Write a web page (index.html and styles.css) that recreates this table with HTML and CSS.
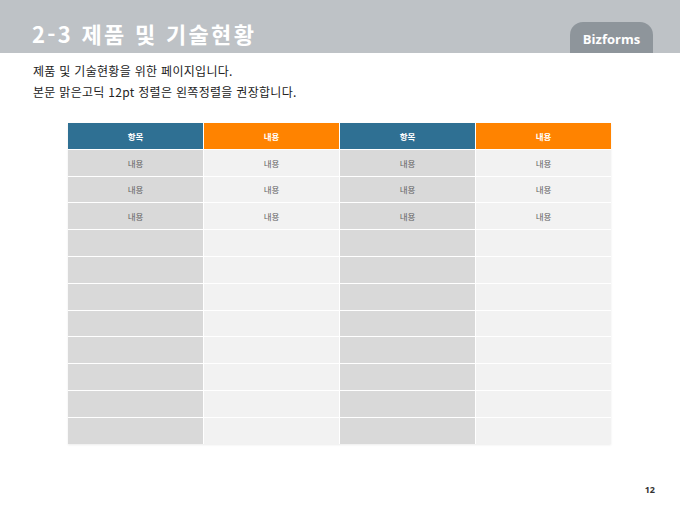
FILE: index.html
```html
<!DOCTYPE html>
<html lang="ko">
<head>
<meta charset="utf-8">
<link rel="stylesheet" href="styles.css">
</head>
<body>
<div class="slide">
  <header class="topbar">
    <h1 class="title">2-3 제품 및 기술현황</h1>
    <div class="tab">Bizforms</div>
  </header>
  <div class="intro">
    <p>제품 및 기술현황을 위한 페이지입니다.</p>
    <p>본문 맑은고딕 12pt 정렬은 왼쪽정렬을 권장합니다.</p>
  </div>
  <div class="grid">
    <div class="cell head blue">항목</div>
    <div class="cell head orange">내용</div>
    <div class="cell head blue">항목</div>
    <div class="cell head orange">내용</div>

    <div class="cell dark">내용</div><div class="cell light">내용</div><div class="cell dark">내용</div><div class="cell light">내용</div>
    <div class="cell dark">내용</div><div class="cell light">내용</div><div class="cell dark">내용</div><div class="cell light">내용</div>
    <div class="cell dark">내용</div><div class="cell light">내용</div><div class="cell dark">내용</div><div class="cell light">내용</div>

    <div class="cell dark"></div><div class="cell light"></div><div class="cell dark"></div><div class="cell light"></div>
    <div class="cell dark"></div><div class="cell light"></div><div class="cell dark"></div><div class="cell light"></div>
    <div class="cell dark"></div><div class="cell light"></div><div class="cell dark"></div><div class="cell light"></div>
    <div class="cell dark"></div><div class="cell light"></div><div class="cell dark"></div><div class="cell light"></div>
    <div class="cell dark"></div><div class="cell light"></div><div class="cell dark"></div><div class="cell light"></div>
    <div class="cell dark"></div><div class="cell light"></div><div class="cell dark"></div><div class="cell light"></div>
    <div class="cell dark"></div><div class="cell light"></div><div class="cell dark"></div><div class="cell light"></div>
    <div class="cell dark"></div><div class="cell light"></div><div class="cell dark"></div><div class="cell light"></div>
  </div>
  <div class="footer"><span class="pagenum">12</span></div>
</div>
</body>
</html>
```
FILE: styles.css
```css
* { box-sizing: border-box; }
html, body { margin: 0; padding: 0; background: #ffffff; }
body {
  font-family: "Noto Sans CJK KR", "Noto Sans", sans-serif;
  color: #222;
}
.slide {
  width: 680px;
  height: 510px;
  display: flex;
  flex-direction: column;
}
.topbar {
  height: 53px;
  background: #bec2c6;
  display: flex;
  justify-content: space-between;
  align-items: flex-end;
  padding: 0 27px 0 32px;
}
.title {
  margin: 0 0 -2px 0;
  font-size: 22px;
  font-weight: 700;
  color: #ffffff;
  line-height: 44px;
  letter-spacing: 2.3px;
}
.tab {
  width: 83px;
  height: 31px;
  background: #8e959b;
  border-radius: 13px 13px 0 0;
  color: #ffffff;
  font-family: "Open Sans", "Noto Sans", sans-serif;
  font-weight: 700;
  font-size: 13px;
  display: flex;
  align-items: center;
  justify-content: center;
  padding-top: 2px;
}
.intro {
  padding: 7px 0 0 33px;
  font-size: 12px;
  letter-spacing: 0.3px;
  line-height: 21px;
  color: #222;
}
.intro p { margin: 0; }
.grid {
  margin: 21px 0 0 68px;
  width: 543px;
  display: grid;
  grid-template-columns: repeat(4, 1fr);
  grid-auto-rows: 25.8px;
  gap: 1px;
  background: #ffffff;
  box-shadow: 0 1px 2px rgba(0,0,0,0.08);
}
.cell {
  display: flex;
  align-items: center;
  justify-content: center;
  font-size: 8.5px;
  color: #606060;
}
.head { color: #ffffff; font-weight: 700; }
.blue { background: #2f7093; }
.orange { background: #ff8300; }
.dark { background: #d9d9d9; }
.light { background: #f2f2f2; }
.footer {
  margin-top: auto;
  display: flex;
  justify-content: flex-end;
  padding: 0 25px 14px 0;
}
.pagenum {
  font-family: "Open Sans", "Noto Sans", sans-serif;
  font-size: 9px;
  font-weight: 700;
  color: #333;
}
```
